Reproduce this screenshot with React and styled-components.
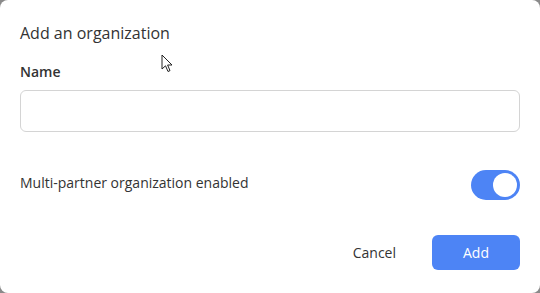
import { useState } from "react";
import styled, { createGlobalStyle } from "styled-components";

const GlobalStyle = createGlobalStyle`
  * { box-sizing: border-box; }
  html, body {
    margin: 0;
    padding: 0;
    background: #8a8a8a;
  }
  body {
    font-family: "Open Sans", "Noto Sans", sans-serif;
    color: #333333;
  }
`;

export default function App() {
  const [name, setName] = useState("");
  const [multiPartner, setMultiPartner] = useState(true);

  return (
    <>
      <GlobalStyle />
      <Dialog>
        <Title>Add an organization</Title>
        <Field>
          <Label htmlFor="org-name">Name</Label>
          <Input
            id="org-name"
            value={name}
            onChange={(e) => setName(e.target.value)}
          />
        </Field>
        <ToggleRow>
          <ToggleLabel>Multi-partner organization enabled</ToggleLabel>
          <Switch
            type="button"
            $on={multiPartner}
            onClick={() => setMultiPartner(!multiPartner)}
          >
            <Knob $on={multiPartner} />
          </Switch>
        </ToggleRow>
        <Actions>
          <CancelButton type="button">Cancel</CancelButton>
          <AddButton type="button">Add</AddButton>
        </Actions>
        <Cursor viewBox="0 0 12 19" width="12" height="19">
          <path
            d="M1 1 L1 15 L4.5 11.8 L7 17.5 L9 16.6 L6.6 11 L11 11 Z"
            fill="#ffffff"
            stroke="#222222"
            strokeWidth="1"
            strokeLinejoin="round"
          />
        </Cursor>
      </Dialog>
    </>
  );
}

const Dialog = styled.div`
  position: relative;
  width: 540px;
  height: 293px;
  background: #ffffff;
  border-radius: 8px;
  padding: 22px 20px 0 20px;
  display: flex;
  flex-direction: column;
`;

const Title = styled.h2`
  margin: 0;
  font-size: 16px;
  font-weight: 400;
  line-height: 22px;
  color: #333333;
`;

const Field = styled.div`
  display: flex;
  flex-direction: column;
  margin-top: 18px;
`;

const Label = styled.label`
  font-size: 14px;
  font-weight: 600;
  line-height: 20px;
  color: #333333;
`;

const Input = styled.input`
  margin-top: 8px;
  width: 100%;
  height: 42px;
  border: 1px solid #d4d4d4;
  border-radius: 6px;
  padding: 0 12px;
  font-family: inherit;
  font-size: 14px;
  outline: none;
`;

const ToggleRow = styled.div`
  display: flex;
  justify-content: space-between;
  align-items: center;
  margin-top: 38px;
`;

const ToggleLabel = styled.span`
  font-size: 14px;
  line-height: 20px;
  color: #333333;
  margin-top: -4px;
`;

const Switch = styled.button`
  width: 49px;
  height: 30px;
  border: none;
  border-radius: 15px;
  background: ${(p) => (p.$on ? "#4d84f5" : "#cccccc")};
  display: flex;
  align-items: center;
  justify-content: ${(p) => (p.$on ? "flex-end" : "flex-start")};
  padding: 0 3px;
  cursor: pointer;
`;

const Knob = styled.span`
  width: 24px;
  height: 24px;
  border-radius: 50%;
  background: #ffffff;
`;

const Actions = styled.div`
  display: flex;
  justify-content: flex-end;
  align-items: center;
  gap: 36px;
  margin-top: 35px;
`;

const CancelButton = styled.button`
  border: none;
  background: transparent;
  font-family: inherit;
  font-size: 14px;
  color: #333333;
  padding: 0;
  cursor: pointer;
`;

const AddButton = styled.button`
  width: 88px;
  height: 35px;
  border: none;
  border-radius: 6px;
  background: #4d84f5;
  color: #ffffff;
  font-family: inherit;
  font-size: 14px;
  cursor: pointer;
`;

const Cursor = styled.svg`
  position: absolute;
  left: 161px;
  top: 54px;
  pointer-events: none;
`;
